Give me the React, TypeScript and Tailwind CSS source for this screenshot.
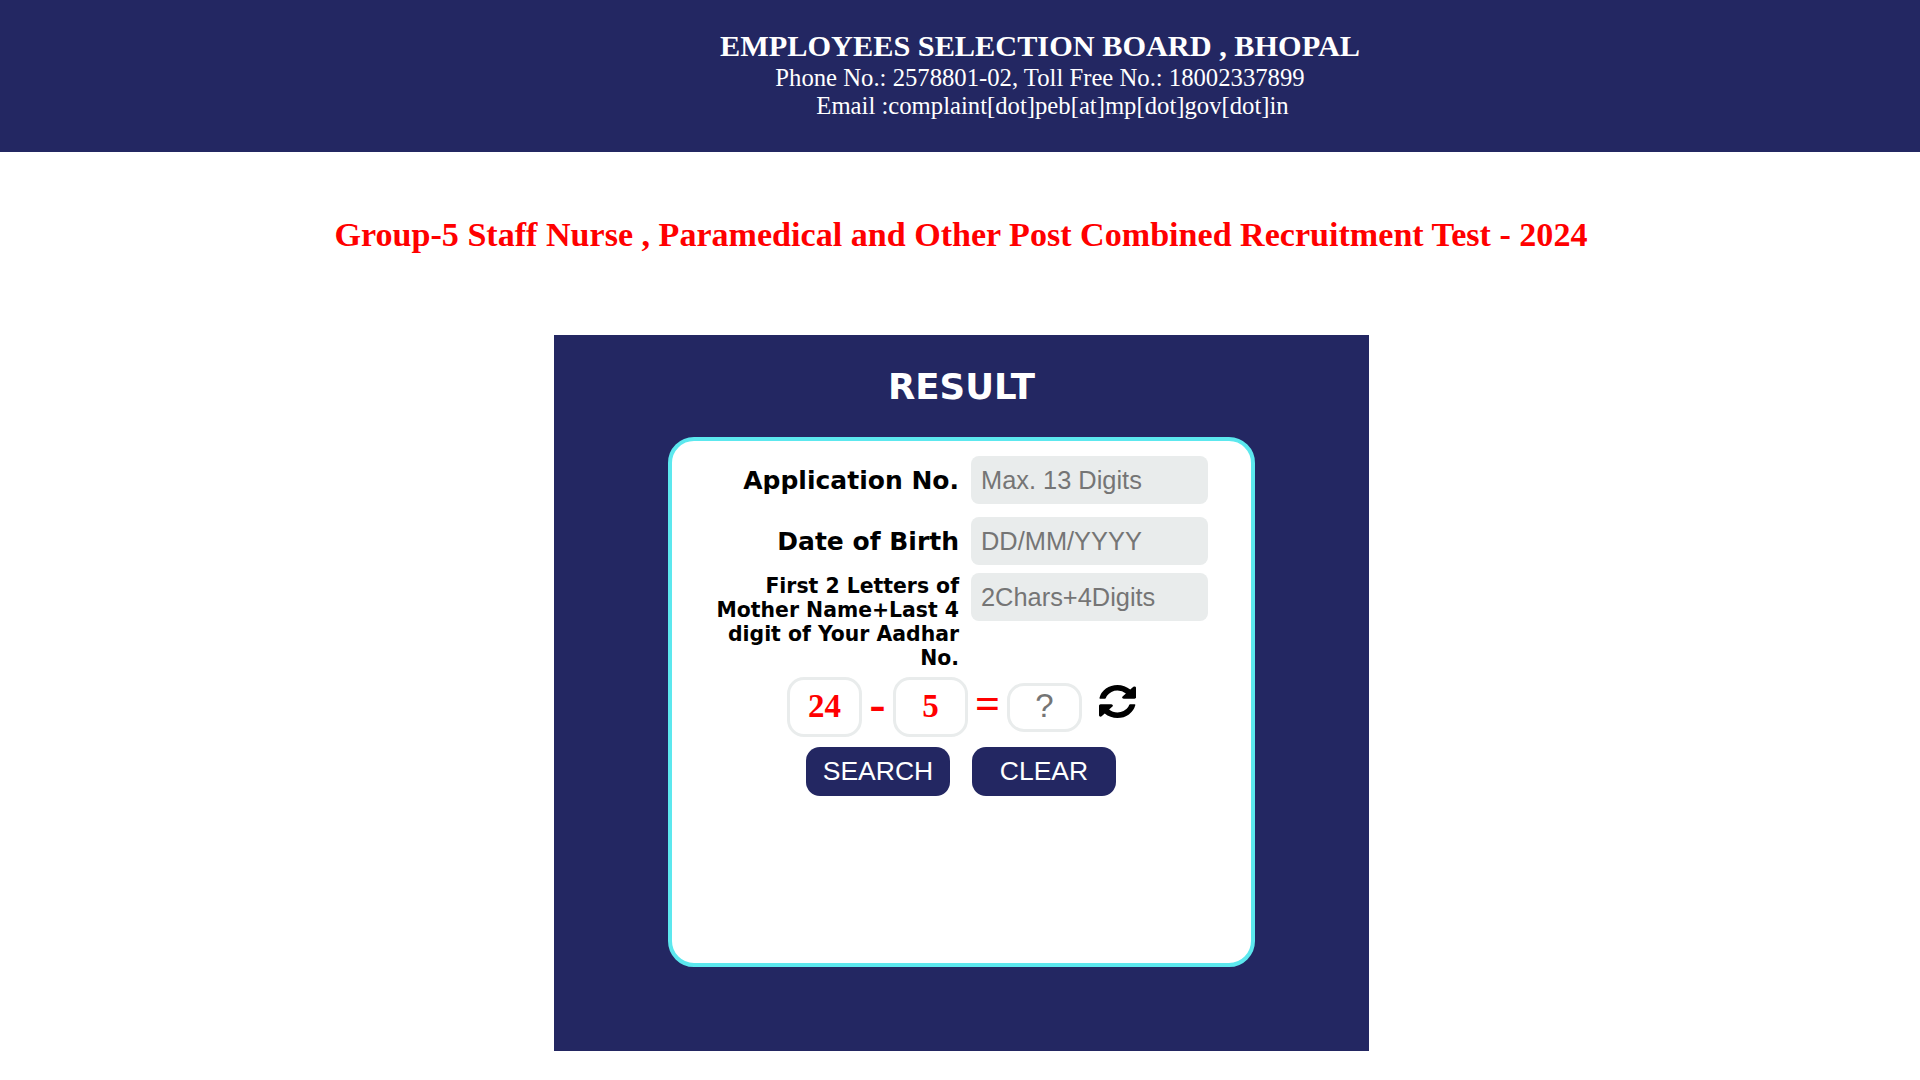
const serif = "font-['Liberation_Serif',serif]";
const sans = "font-['Liberation_Sans',Arial,sans-serif]";
const dejavu = "font-['DejaVu_Sans',Verdana,sans-serif]";
const navy = "bg-[#232762]";

function Field({ label, placeholder, small }: { label: string; placeholder: string; small?: boolean }) {
  return (
    <div className="flex items-start gap-3">
      <label
        className={`w-[280px] shrink-0 text-right font-bold text-black ${dejavu} ${
          small ? "pl-[30px] pt-px text-[20.4px] leading-[24px]" : "pt-2.5 text-[25px] leading-[30px]"
        }`}
      >
        {label}
      </label>
      <input
        readOnly
        placeholder={placeholder}
        className={`h-[48px] w-[237px] rounded-lg bg-[#e9ecec] pl-[10px] pr-2 text-[25.4px] outline-none placeholder:text-[#757575] ${sans}`}
      />
    </div>
  );
}

function NumBox({ value }: { value: string }) {
  return (
    <div
      className={`flex h-[60px] w-[75px] items-center justify-center rounded-[17px] border-[3px] border-[#e9ecec] text-[33px] font-bold text-[#ff0000] ${serif}`}
    >
      {value}
    </div>
  );
}

export default function App() {
  return (
    <div className="min-h-[1080px] bg-white">
      <header className={`${navy} flex h-[152px] flex-col items-center pl-[160px] pt-[28px] text-white ${serif}`}>
        <div className="text-[30.3px] font-bold leading-[36px]">EMPLOYEES SELECTION BOARD , BHOPAL</div>
        <div className="text-[24.7px] leading-[28px]">Phone No.: 2578801-02, Toll Free No.: 18002337899</div>
        <div className="pl-[25px] text-[24.7px] leading-[28px]">Email :complaint[dot]peb[at]mp[dot]gov[dot]in</div>
      </header>

      <h1 className={`pt-[60px] pl-[2px] text-center text-[34.1px] font-bold leading-[46px] text-[#ff0000] ${serif}`}>
        Group-5 Staff Nurse , Paramedical and Other Post Combined Recruitment Test - 2024
      </h1>

      <div className="mt-[77px] flex justify-center pl-[3px]">
        <section className={`${navy} flex h-[716px] w-[815px] flex-col items-center pt-[30px]`}>
          <h2 className={`text-[35.5px] font-bold leading-[44px] text-white ${dejavu}`}>RESULT</h2>
          <div className="mt-[28px] h-[530px] w-[587px] rounded-[26px] border-4 border-[#5ce8ee] bg-white pt-[15px]">
            <div className="flex flex-col">
              <div className="pl-[7px]">
                <Field label="Application No." placeholder="Max. 13 Digits" />
              </div>
              <div className="mt-[13px] pl-[7px]">
                <Field label="Date of Birth" placeholder="DD/MM/YYYY" />
              </div>
              <div className="mt-2 pl-[7px]">
                <Field small label="First 2 Letters of Mother Name+Last 4 digit of Your Aadhar No." placeholder="2Chars+4Digits" />
              </div>
            </div>

            <div className="mt-[7px] flex items-center pl-[115px]">
              <NumBox value="24" />
              <span className={`flex w-[31px] justify-center pb-[7px] text-[48px] font-bold leading-none text-[#ff0000] ${serif}`}>-</span>
              <NumBox value="5" />
              <span className={`flex w-[39px] justify-center pb-[7px] text-[44px] font-bold leading-none text-[#ff0000] ${serif}`}>=</span>
              <input
                readOnly
                placeholder="?"
                className={`h-[49px] w-[75px] rounded-[17px] border-[3px] border-[#e9ecec] pb-[2px] text-center text-[33px] outline-none placeholder:text-[#757575] ${sans}`}
              />
              <svg
                className="mb-[12px] ml-[17px] text-black"
                width="37"
                height="33"
                viewBox="128 128 1536 1536"
                preserveAspectRatio="none"
                fill="currentColor"
              >
                <path d="M1639 1056q0 5-1 7-64 268-268 434.5t-478 166.5q-146 0-282.5-55t-243.5-157l-129 129q-19 19-45 19t-45-19-19-45v-448q0-26 19-45t45-19h448q26 0 45 19t19 45-19 45l-137 137q71 66 161 102t187 36q134 0 250-65t186-179q11-17 53-117 8-23 30-23h192q13 0 22.5 9.5t9.5 22.5zm25-800v448q0 26-19 45t-45 19h-448q-26 0-45-19t-19-45 19-45l138-138q-148-137-349-137-134 0-250 65t-186 179q-11 17-53 117-8 23-30 23h-199q-13 0-22.5-9.5t-9.5-22.5v-7q65-268 270-434.5t480-166.5q146 0 284 55.5t245 156.5l130-129q19-19 45-19t45 19 19 45z" />
              </svg>
            </div>

            <div className={`mt-[10px] flex gap-[22px] pl-[134px] ${sans}`}>
              <button className={`${navy} h-[49px] w-[144px] rounded-[14px] text-[26.5px] text-white`}>SEARCH</button>
              <button className={`${navy} h-[49px] w-[144px] rounded-[14px] text-[26.5px] text-white`}>CLEAR</button>
            </div>
          </div>
        </section>
      </div>
    </div>
  );
}
